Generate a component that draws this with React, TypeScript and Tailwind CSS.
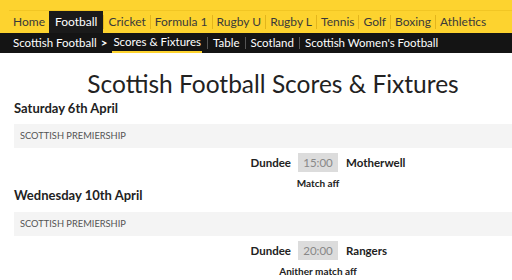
import React from "react";

const top = ["Home", "Football", "Cricket", "Formula 1", "Rugby U", "Rugby L", "Tennis", "Golf", "Boxing", "Athletics"];

function Match({ home, time, away, note }: { home: string; time: string; away: string; note: string }) {
  return (
    <div className="w-[608px] flex flex-col items-center">
      <div className="grid grid-cols-[1fr_40px_1fr] items-center w-full">
        <div className="flex justify-end pr-[7px] text-[11.5px] font-bold text-[#222]">{home}</div>
        <div className="h-[19px] bg-[#dcdcdc] flex items-center justify-center text-[11.5px] text-[#888]">{time}</div>
        <div className="pl-[8px] text-[11.5px] font-bold text-[#222]">{away}</div>
      </div>
      <div className="mt-[5px] text-[10px] leading-[12px] font-bold text-[#222] whitespace-nowrap">{note}</div>
    </div>
  );
}

export default function App() {
  return (
    <div className="w-[512px] h-[280px] bg-white overflow-hidden font-['Lato',sans-serif]">
      <div className="bg-[#fdd32f] h-[33px] flex items-end pl-[9px] pt-[10px] whitespace-nowrap">
        <div className="flex items-end h-[23px] w-full border-t border-[#f2c624]">
          {top.map((t, i) => (
            <div key={t} className="flex items-center h-[22px]">
              {i > 1 && <div className="w-px h-[14px] bg-[#e3b51c]" />}
              <div className={`px-[4px] h-[22px] flex items-center text-[12px] ${t === "Football" ? "bg-[#1a1a1a] text-white px-[6px]" : "text-[#3a3a3a]"}`}>{t}</div>
            </div>
          ))}
        </div>
      </div>
      <div className="bg-[#141414] h-[20px] flex items-stretch pl-[13px] text-[11.5px] text-white whitespace-nowrap">
        <div className="flex items-center">Scottish Football <span className="ml-[4px] font-bold">&gt;</span></div>
        <div className="flex items-center ml-[5px] px-[1px] border-b-[2px] border-[#fdd32f]">Scores &amp; Fixtures</div>
        {["Table", "Scotland", "Scottish Women's Football"].map((t) => (
          <div key={t} className="flex items-center">
            <div className="w-px h-[12px] bg-[#555] mx-[5px]" />
            {t}
          </div>
        ))}
      </div>
      <div className="text-center pl-[34px] text-[24.5px] text-[#222] mt-[15px] leading-[32px] whitespace-nowrap">Scottish Football Scores &amp; Fixtures</div>
      <div className="pl-[14px]">
        <div className="text-[13px] font-bold text-[#222] leading-[16px]">Saturday 6th April</div>
        <div className="mt-[8px] bg-[#f4f4f4] h-[24px] flex items-center pl-[6px] text-[9.3px] text-[#555]">SCOTTISH PREMIERSHIP</div>
        <div className="mt-[5px]">
          <Match home="Dundee" time="15:00" away="Motherwell" note="Match aff" />
        </div>
        <div className="mt-[-2px] text-[13px] font-bold text-[#222] leading-[16px]">Wednesday 10th April</div>
        <div className="mt-[9px] bg-[#f4f4f4] h-[24px] flex items-center pl-[6px] text-[9.3px] text-[#555]">SCOTTISH PREMIERSHIP</div>
        <div className="mt-[5px]">
          <Match home="Dundee" time="20:00" away="Rangers" note="Anither match aff" />
        </div>
      </div>
    </div>
  );
}
